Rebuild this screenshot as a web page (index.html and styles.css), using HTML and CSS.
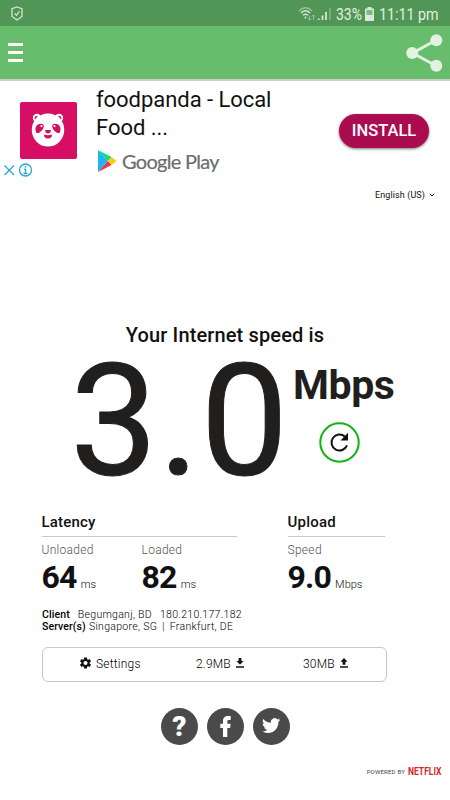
FILE: index.html
```html
<!DOCTYPE html>
<html lang="en">
<head>
<meta charset="utf-8">
<title>Internet speed</title>
<link rel="stylesheet" href="styles.css">
</head>
<body>
<div class="status">
  <svg class="shield" width="12" height="15" viewBox="0 0 12 15" fill="none" stroke="#d3e7d4"><path d="M6 1 11 2.7V10.5L6 14 1 10.5V2.7Z" stroke-width="1.3"/><path d="M3.7 7.5 5.5 9.4 8.6 5" stroke-width="1.2"/></svg>
  <svg class="signals" width="34" height="16" viewBox="0 0 34 16" fill="none" stroke="#d3e7d4">
    <path d="M1 5Q7.5-1.5 14 5" stroke-width="1.2" opacity=".55"/><path d="M3 7Q7.500 2.500 12 7" stroke-width="1.4"/><path d="M5 9.300Q7.500 7 10 9.300" stroke-width="1.400"/><circle cx="7.500" cy="11.500" r="1" fill="#d3e7d4" stroke="none"/>
    <path d="M11.500 9.500V14M10 12.500 11.500 14 13 12.500M15.500 14V9M14 10.500 15.500 9 17 10.500" opacity=".5"/>
    <path d="M20.700 14V12.500M24.500 14V9.500M28 14V6" stroke-width="1.800"/><path d="M32 14V2" stroke-width="1.300" opacity=".45"/>
  </svg>
  <span class="percent">33%</span>
  <svg class="battery" width="9" height="14" viewBox="0 0 9 14"><path d="M2.500 0H6.500V1.500H9V14H0V1.500H2.500Z" fill="#d9ead9"/><path d="M1.500 3H7.500V8H1.500Z" fill="#83b686"/></svg>
  <span class="clock">11:11 pm</span>
</div>
<header class="bar">
  <div class="burger"><i></i><i></i><i></i></div>
  <svg class="share" width="37" height="40" viewBox="0 0 37 40" fill="#e1f2e1"><path d="M30.500 7 6.500 20 30.500 33" fill="none" stroke="#e1f2e1" stroke-width="3"/><circle cx="6.200" cy="20" r="6"/><circle cx="30.300" cy="7.200" r="6"/><circle cx="30.300" cy="32.800" r="6"/></svg>
</header>
<section class="ad">
  <div class="ad-left">
    <svg class="panda" width="57" height="57" viewBox="0 0 57 57"><rect width="57" height="57" rx="2" fill="#d70f64"/><g fill="#fff"><circle cx="17" cy="16" r="4.200"/><circle cx="39" cy="16" r="4.200"/><ellipse cx="28" cy="28" rx="16.200" ry="16.500"/></g><g transform="translate(-.5 -.5)" fill="#d70f64"><path d="M15 16.500Q15.500 14 18.500 14.300L15.500 18ZM42 16.500Q41.500 14 38.500 14.300L41.500 18Z"/><path d="M16.500 30.500C14.500 25 18.500 21.500 23 22.500 26 24 23.500 29 20 31 18.500 32 17 32 16.500 30.500ZM40.500 30.500C42.500 25 38.500 21.500 34 22.500 31 24 33.500 29 37 31 38.500 32 40 32 40.500 30.500Z"/><path d="M25.500 28.500H31.500Q31 32 28.500 32 26 32 25.500 28.500ZM24.500 33Q28.500 34.500 32.500 33 32.500 37 28.500 37 24.500 37 24.500 33Z"/></g><circle cx="21.500" cy="24.100" r="1.100" fill="#fff"/><circle cx="34.500" cy="24.100" r="1.100" fill="#fff"/></svg>
    <svg class="adinfo" width="30" height="14" viewBox="0 0 30 14" fill="none" stroke="#25a9cf"><path d="M.5 2.500 10 12M10 2.500.5 12" stroke-width="1.300"/><circle cx="21.500" cy="7" r="6" stroke-width="1.300"/><path d="M21.500 6V10.700M21.500 3V4.700M20 6.200H21.500M19.500 10.500H23.500" stroke-width="1.300"/></svg>
  </div>
  <div class="ad-copy">
    <div class="ad-title">foodpanda - Local<br>Food ...</div>
    <div class="play"><svg width="20" height="24" viewBox="0 0 20 24"><path d="M1 1V23L11 12Z" fill="#20b5ee"/><path d="M1 1 14.500 8 11 12Z" fill="#15db7f"/><path d="M1 23 14.500 16 11 12Z" fill="#ef3448"/><path d="M14.500 8 19.500 12 14.500 16 11 12Z" fill="#ffc907"/></svg><span>Google Play</span></div>
  </div>
  <div class="install"><span>INSTALL</span></div>
</section>
<div class="language"><span>English (US)</span><svg width="6" height="4" viewBox="0 0 6 4"><path d="M.8.800 3 3 5.200.8" fill="none" stroke="#222"/></svg></div>
<main>
  <h1><span>Your Internet speed is</span></h1>
  <section class="result">
    <div class="value">3.0</div>
    <div class="unit"><span class="mbps">Mbps</span><svg class="reload" width="41" height="41" viewBox="0 0 41 41"><circle cx="20.500" cy="20.500" r="19.200" fill="none" stroke="#12b312" stroke-width="2"/><path d="M28 23.400A8 8 0 1 1 25.800 14.500" fill="none" stroke="#111" stroke-width="2"/><path d="M29 10.800V18.500H21.500Z" fill="#111"/></svg></div>
  </section>
  <section class="details">
    <div class="latency">
      <h2>Latency</h2>
      <div class="pair"><div><p>Unloaded</p><div class="metric"><b>64</b><span>ms</span></div></div><div><p>Loaded</p><div class="metric"><b>82</b><span>ms</span></div></div></div>
    </div>
    <div class="upload"><h2>Upload</h2><p>Speed</p><div class="metric"><b>9.0</b><span class="wide">Mbps</span></div></div>
  </section>
  <section class="info">
    <div><b>Client</b><span class="place">Begumganj, BD</span><span class="ip">180.210.177.182</span></div>
    <div><b>Server(s)</b><span class="city">Singapore, SG</span><span class="sep">|</span><span>Frankfurt, DE</span></div>
  </section>
  <section class="box">
    <div class="settings"><svg width="11" height="12" viewBox="0 0 24 24"><path fill="#111" fill-rule="evenodd" d="M9 0h6l.6 3.800 2 1.100L21.200 3.500 24 8.500l-3 2.400v2.200l3 2.400-2.800 5-3.600-1.400-2 1.100L15 24H9l-.6-3.800-2-1.100L2.800 20.500 0 15.500l3-2.400v-2.200L0 8.500l2.800-5 3.600 1.400 2-1.100ZM12 7.500a4.500 4.500 0 1 0 0 9 4.500 4.500 0 1 0 0-9Z"/></svg><span>Settings</span></div>
    <div class="down"><span>2.9MB</span><svg width="8" height="10" viewBox="0 0 8 10"><path d="M2.600 0H5.400V3H7.500L4 6.800.500 3H2.600ZM0 8.300H8V9.700H0Z" fill="#111"/></svg></div>
    <div class="up"><span>30MB</span><svg width="8" height="10" viewBox="0 0 8 10"><path d="M2.600 6.800H5.400V3.800H7.500L4 0 .500 3.800H2.600ZM0 8.300H8V9.700H0Z" fill="#111"/></svg></div>
  </section>
  <nav class="links">
    <div class="round help"><span>?</span></div>
    <div class="round"><svg width="37" height="37" viewBox="0 0 37 37"><path d="M16 29V20H13.300V15.800H16V13C16 9.500 18 8 21 8H23.700V12H22C20.500 12 20.300 12.600 20.300 13.700V15.800H23.600L23.100 20H20.300V29Z" fill="#fff"/></svg></div>
    <div class="round"><svg width="37" height="37" viewBox="0 0 37 37"><g transform="translate(9 8.500) scale(.76)"><path fill="#fff" d="M23.950 4.570a10 10 0 0 1-2.820.77 4.960 4.960 0 0 0 2.160-2.720c-.95.550-2 .95-3.130 1.180A4.920 4.920 0 0 0 11.780 8.300C7.690 8.100 4.070 6.130 1.640 3.160a4.820 4.820 0 0 0-.67 2.480c0 1.710.87 3.210 2.190 4.100a4.900 4.900 0 0 1-2.230-.62v.06a4.920 4.920 0 0 0 3.950 4.830 5 5 0 0 1-2.210.08 4.940 4.940 0 0 0 4.600 3.420A9.870 9.870 0 0 1 0 19.540a13.990 13.990 0 0 0 7.560 2.210c9.050 0 14-7.500 14-13.980 0-.21 0-.42-.02-.63A9.940 9.940 0 0 0 23.950 4.570Z"/></g></svg></div>
  </nav>
</main>
<footer><span class="powered">POWERED BY</span><span class="netflix">NETFLIX</span></footer>
</body>
</html>
```
FILE: styles.css
```css
* { box-sizing: border-box; }
body { margin: 0; width: 450px; height: 800px; overflow: hidden; background: #fff; color: #111; font-family: Roboto, "Liberation Sans", sans-serif; }
svg { display: block; flex: none; }
span, b { white-space: nowrap; }
h1, h2, p { margin: 0; }

.status { display: flex; align-items: center; height: 26px; padding: 1px 12px 0 11px; background: #519656; color: #e1efe1; font-size: 17px; }
.signals { margin-left: auto; }
.percent { width: 26px; margin-left: 4px; transform: scaleX(.82); transform-origin: left; }
.battery { margin-left: 3px; }
.clock { width: 59px; margin-left: 5px; transform: scaleX(.84); transform-origin: left; }

.bar { display: flex; justify-content: space-between; align-items: center; height: 55px; padding: 0 7px 0 8px; background: #67bd6b; border-bottom: 2px solid #ccc; }
.burger { display: grid; gap: 5px; }
.burger i { width: 15px; height: 3px; background: #fff; }

.ad { display: flex; height: 98px; padding: 0 21px 0 4px; }
.ad-left { width: 92px; padding-top: 21px; }
.panda { margin-left: 16px; }
.adinfo { margin-top: 4px; }
.ad-copy { flex: 1; padding-top: 5px; }
.ad-title { font-size: 22px; line-height: 28px; letter-spacing: -.05px; }
.play { display: flex; align-items: center; gap: 5px; margin: 7px 0 0 1px; color: #6d6d6d; font: 20px/24px Lato, sans-serif; letter-spacing: -.7px; -webkit-text-stroke: .2px #6d6d6d; }
.install { display: grid; place-items: center; width: 90px; height: 34px; margin-top: 33px; border-radius: 17px; background: #ab0c50; box-shadow: 0 1px 3px #777; color: #fff; font-size: 16.500px; font-weight: 500; }
.install span { position: relative; top: -1px; }

.language { display: flex; align-items: center; justify-content: flex-end; gap: 4px; height: 32px; padding-right: 15px; font-size: 9px; letter-spacing: .1px; }
main { padding: 112px 42px 0; }
h1 { height: 24px; text-align: center; font-size: 20px; line-height: 24px; font-weight: 500; letter-spacing: .13px; }
.result { display: flex; height: 147px; margin-left: 28px; color: #201f1e; }
.value { width: 223px; font-size: 156px; line-height: 147px; letter-spacing: .8px; -webkit-text-stroke: 1px #201f1e; }
.unit { display: flex; flex-direction: column; }
.mbps { height: 50px; margin-top: 13px; font-size: 41px; line-height: 50px; font-weight: 700; letter-spacing: -.4px; }
.reload { margin: 12px 0 0 26px; }

.details { display: flex; gap: 51px; height: 112px; padding-top: 18px; margin-left: -.5px; }
.latency { width: 195px; }
.upload { width: 97px; }
h2 { height: 25px; border-bottom: 1px solid #c8c8c8; margin-bottom: 5px; font-size: 15px; line-height: 20px; font-weight: 500; letter-spacing: .2px; }
.details p { height: 16px; color: #555; font-size: 12px; line-height: 16px; font-weight: 300; letter-spacing: .3px; }
.pair { display: grid; grid-template-columns: 100px 1fr; }
.metric { display: flex; align-items: baseline; gap: 4px; line-height: 38px; font-size: 11px; font-weight: 300; }
.metric b { font-size: 32px; letter-spacing: -.8px; font-weight: 700; }

.info { padding-top: 3px; font-size: 10.500px; line-height: 12px; font-weight: 300; letter-spacing: .3px; color: #000; }
.info div { display: flex; }
.info b { font-weight: 500; letter-spacing: .1px; }
.place { margin-left: 8px; }
.ip { margin-left: 8px; }
.city { margin-left: 3px; }
.sep { margin: 0 5px; }
.box { display: grid; grid-template-columns: 137px 98px 1fr; width: 345px; height: 35px; margin-top: 14px; border: 1px solid #c8c8c8; border-radius: 6px; font-size: 12px; font-weight: 300; letter-spacing: .2px; color: #000; }
.box > div { display: flex; align-items: center; gap: 5px; }
.box svg { margin-top: -3px; }
.box span { position: relative; top: -1px; }
.settings { padding-left: 37px; }
.down { padding-left: 16px; }
.up { padding-left: 25px; }
.links { display: flex; gap: 9px; margin: 26px 0 0 119px; }
.round { width: 37px; height: 37px; border-radius: 50%; background: #4a4a4a; }
.help { display: grid; place-items: center; color: #fff; font-size: 28px; line-height: 36px; font-weight: 900; }
footer { display: flex; align-items: center; justify-content: flex-end; gap: 3px; height: 16px; margin-top: 18px; padding-right: 9px; }
.powered { font-size: 6px; letter-spacing: .2px; color: #444; }
.netflix { width: 33px; color: #d81f26; font-size: 10px; font-weight: 700; transform: scaleX(.85); transform-origin: left; }
```
